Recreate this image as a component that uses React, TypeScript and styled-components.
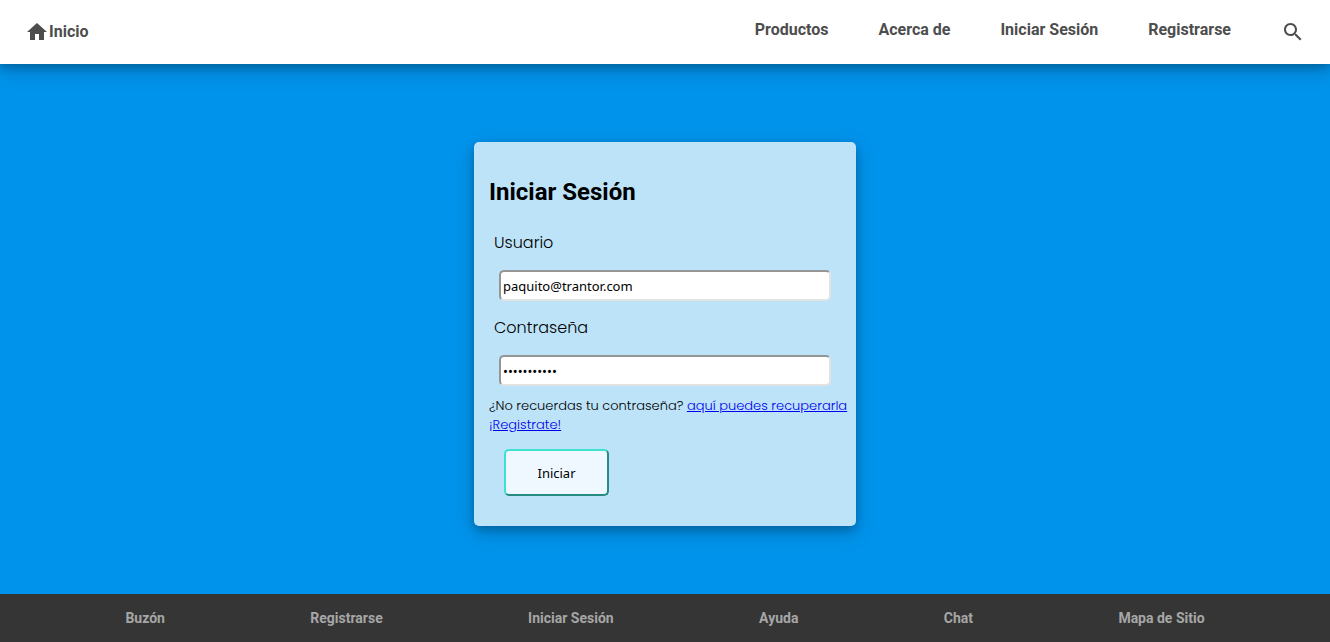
import React from "react";
import styled, { createGlobalStyle } from "styled-components";

const shadow = "0 4px 8px 0 rgba(0, 0, 0, 0.2), 0 6px 20px 0 rgba(0, 0, 0, 0.19)";

const GlobalStyle = createGlobalStyle`
  *, *::before, *::after { box-sizing: border-box; }
  body {
    margin: 0;
    background: #0093eb;
    color: #000;
    font-family: Roboto, "Liberation Sans", sans-serif;
  }
`;

const Page = styled.div`
  min-height: 100vh;
  display: flex;
  flex-direction: column;
`;

const Header = styled.header`
  display: flex;
  align-items: center;
  justify-content: space-between;
  min-height: 64px;
  padding: 0 25px;
  background: #fff;
  box-shadow: ${shadow};
`;

const HomeLink = styled.a`
  display: flex;
  align-items: flex-start;
  color: #4d4d4d;
  font-size: 16px;
  font-weight: 700;
  line-height: 26px;
  text-decoration: none;
`;

const Icon = styled.svg`
  display: block;
  width: 24px;
  height: 24px;
  fill: #4d4d4d;
`;

const HomeIcon = styled(Icon)`
  align-self: center;
`;

const Nav = styled.nav`
  display: flex;
  align-items: flex-start;
  gap: 50px;
`;

const NavLink = styled.a`
  color: #4d4d4d;
  font-size: 16px;
  font-weight: 700;
  line-height: 19px;
  text-decoration: none;
`;

const SearchButton = styled.button`
  padding: 0;
  border: 0;
  background: none;
  cursor: pointer;
`;

const Main = styled.main`
  flex: 1;
  display: flex;
  align-items: center;
  justify-content: center;
  padding: 20px 10px 10px;
`;

const Card = styled.form`
  width: 382px;
  max-width: 100%;
  padding: 36px 15px 30px;
  border-radius: 5px;
  background: #bde3f8;
  box-shadow: ${shadow};
`;

const Title = styled.h2`
  margin: 0 0 25px;
  font-size: 24px;
  font-weight: 700;
  line-height: 28px;
`;

const Field = styled.div`
  display: flex;
  flex-direction: column;
  padding: 0 5px;
`;

const Label = styled.label`
  font-family: Poppins, Inter, sans-serif;
  font-size: 16px;
  font-weight: 300;
  line-height: 24px;
`;

const TextInput = styled.input`
  height: 31px;
  margin: 15px 5px;
  padding: 1px 2px;
  border: 2px solid;
  border-color: #959595 #e3e3e3 #e3e3e3 #959595;
  border-radius: 5px;
  background: #fff;
  color: #000;
  font-family: "Noto Sans", sans-serif;
  font-size: 13px;
`;

const Help = styled.p`
  margin: -5px 0 15px;
  font-family: Poppins, Inter, sans-serif;
  font-size: 13px;
  font-weight: 300;
  line-height: 19px;
  white-space: nowrap;
`;

const HelpLink = styled.a`
  color: #0000ee;
`;

const SubmitButton = styled.button`
  display: block;
  width: 105px;
  height: 47px;
  margin: 0 15px;
  border: 2px outset turquoise;
  border-radius: 5px;
  background: aliceblue;
  color: #000;
  font-family: "Noto Sans", sans-serif;
  font-size: 13px;
`;

const Footer = styled.footer`
  display: flex;
  flex-wrap: wrap;
  align-items: center;
  justify-content: space-evenly;
  min-height: 48px;
  background: #353535;
`;

const FooterLink = styled.a`
  margin: 0 20px;
  color: #a6a6a6;
  font-size: 14px;
  font-weight: 700;
  line-height: 20px;
  text-decoration: none;
`;

const navItems = ["Productos", "Acerca de", "Iniciar Sesión", "Registrarse"];
const footerItems = ["Buzón", "Registrarse", "Iniciar Sesión", "Ayuda", "Chat", "Mapa de Sitio"];

export default function App() {
  return (
    <>
      <GlobalStyle />
      <Page>
        <Header>
          <HomeLink href="#">
            <HomeIcon viewBox="0 0 24 24" aria-hidden="true">
              <path d="M10 20v-6h4v6h5v-8h3L12 3 2 12h3v8z" />
            </HomeIcon>
            Inicio
          </HomeLink>
          <Nav>
            {navItems.map((item) => (
              <NavLink href="#" key={item}>{item}</NavLink>
            ))}
            <SearchButton type="button" aria-label="Buscar">
              <Icon viewBox="0 0 24 24" aria-hidden="true">
                <path d="M15.5 14h-.79l-.28-.27C15.41 12.59 16 11.11 16 9.5 16 5.91 13.09 3 9.5 3S3 5.91 3 9.5 5.91 16 9.5 16c1.61 0 3.09-.59 4.23-1.57l.27.28v.79l5 4.99L20.49 19l-4.99-5zm-6 0C7.01 14 5 11.99 5 9.5S7.01 5 9.5 5 14 7.01 14 9.5 11.99 14 9.5 14z" />
              </Icon>
            </SearchButton>
          </Nav>
        </Header>
        <Main>
          <Card onSubmit={(event: React.FormEvent) => event.preventDefault()}>
            <Title>Iniciar Sesión</Title>
            <Field>
              <Label htmlFor="usuario">Usuario</Label>
              <TextInput id="usuario" type="text" defaultValue="paquito@trantor.com" />
            </Field>
            <Field>
              <Label htmlFor="clave">Contraseña</Label>
              <TextInput id="clave" type="password" defaultValue="trantor1234" />
            </Field>
            <Help>
              ¿No recuerdas tu contraseña? <HelpLink href="#">aquí puedes recuperarla</HelpLink>
              <br />
              <HelpLink href="#">¡Registrate!</HelpLink>
            </Help>
            <SubmitButton type="submit">Iniciar</SubmitButton>
          </Card>
        </Main>
        <Footer>
          {footerItems.map((item) => (
            <FooterLink href="#" key={item}>{item}</FooterLink>
          ))}
        </Footer>
      </Page>
    </>
  );
}
